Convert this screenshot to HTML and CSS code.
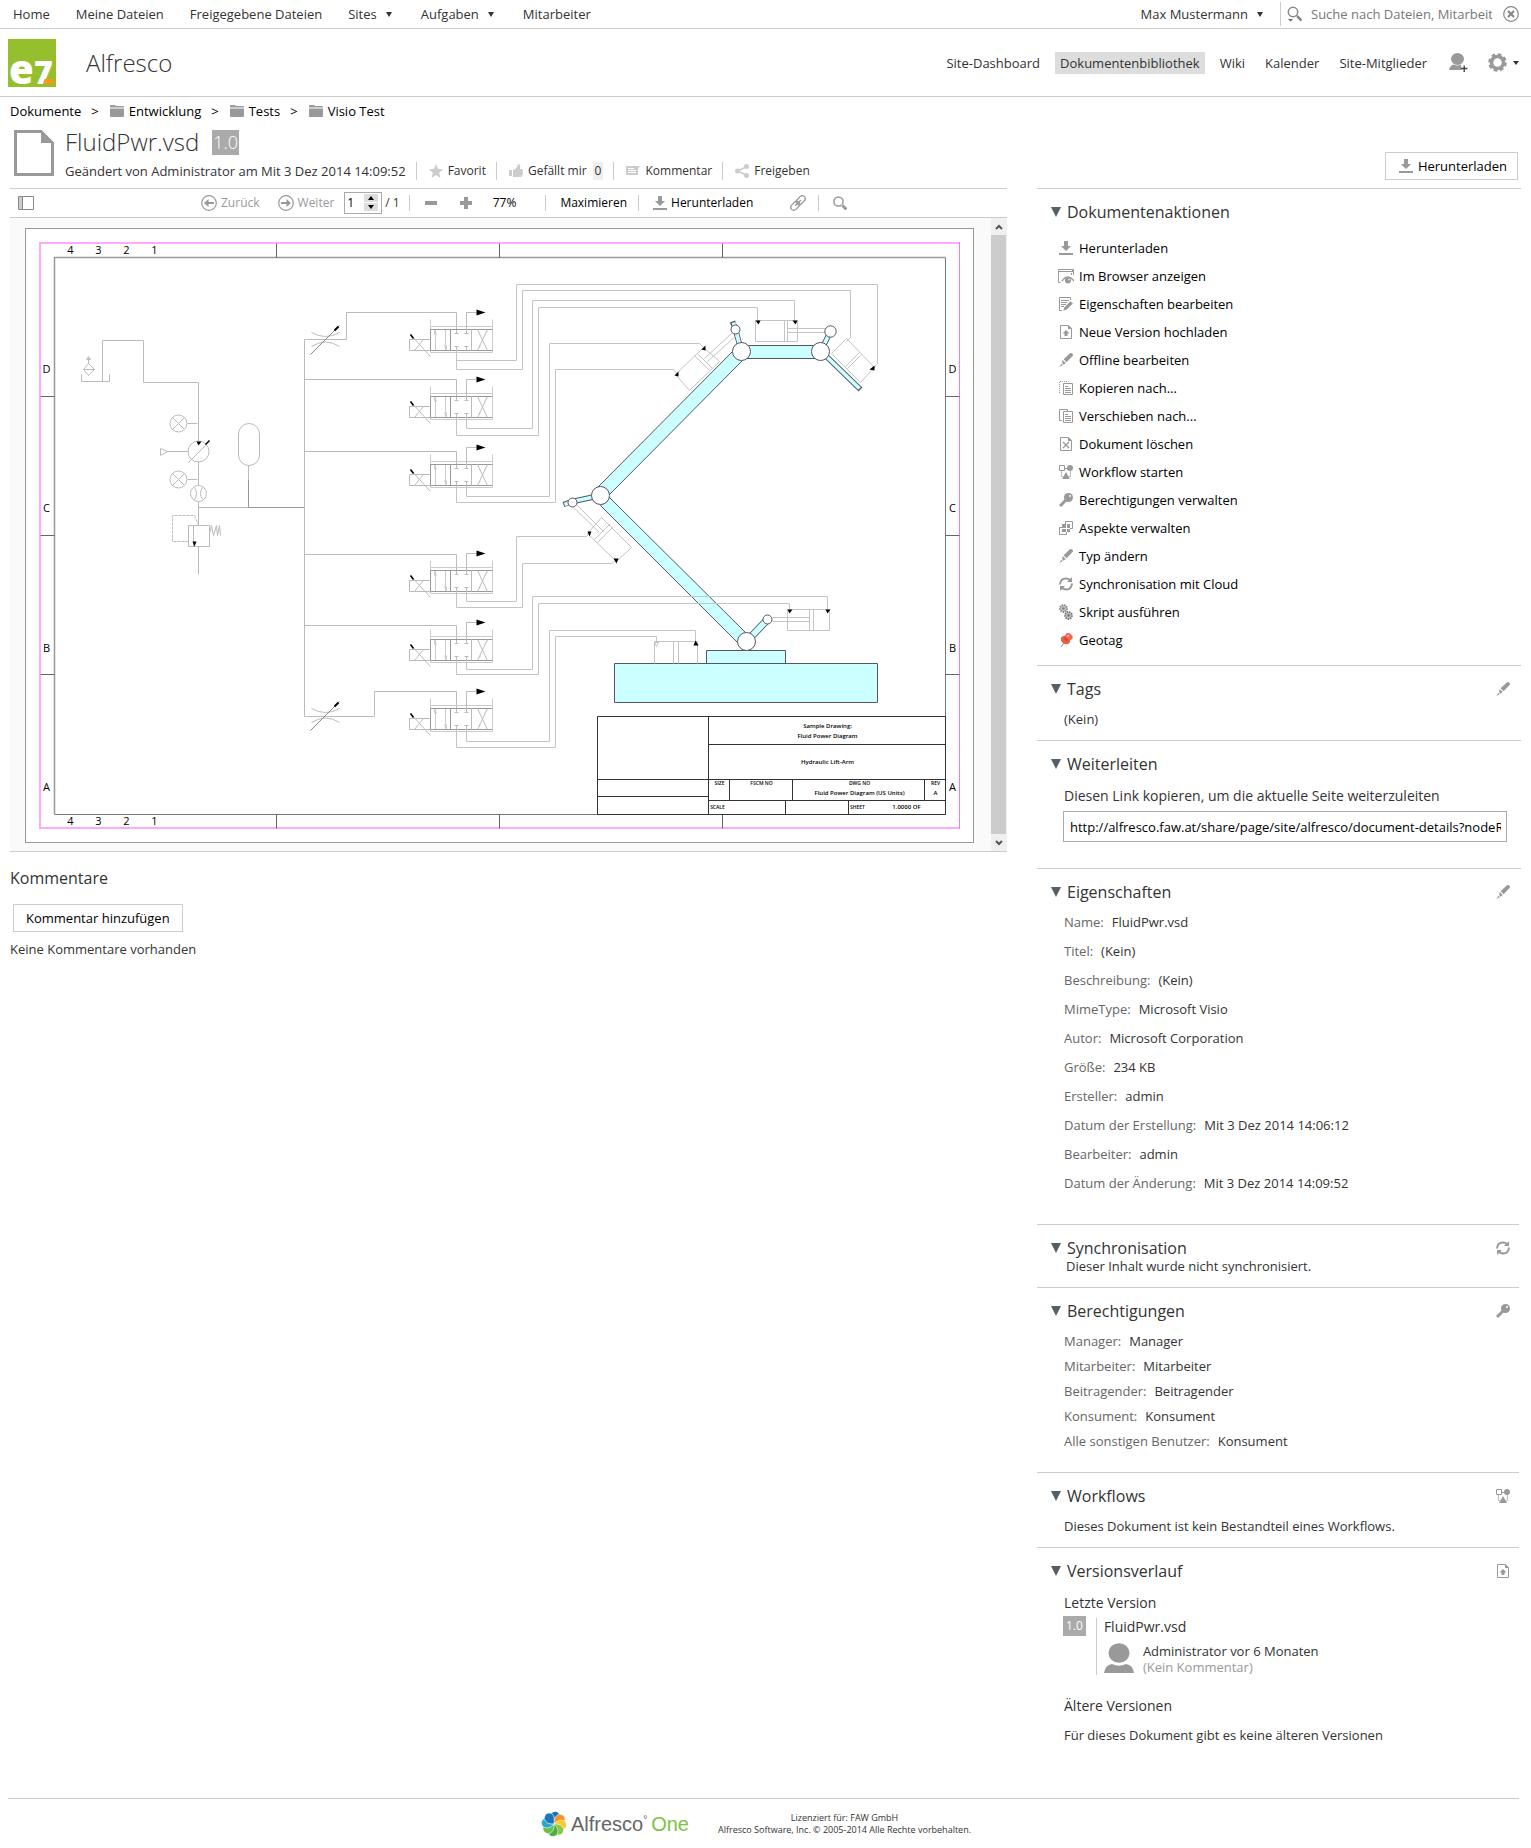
FILE: index.html
```html
<!DOCTYPE html>
<html lang="de">
<head>
<meta charset="utf-8">
<title>Alfresco – FluidPwr.vsd</title>
<link rel="stylesheet" href="styles.css">
</head>
<body>
<svg class="defs" aria-hidden="true">
  <symbol id="i-down" viewBox="0 0 14 14"><path fill="#999" d="M5 0h4v5h3L7 10 2 5h3zM0 12h14v2H0z"/></symbol>
  <symbol id="i-browser" viewBox="0 0 16 16"><path fill="none" stroke="#999" d="M2.500 14.500h-2V1.500h15V7M0 3.500h16M14.500 1v2M13.500 5v2"/><path fill="none" stroke="#999" stroke-width="1.400" d="M4 13q6-8 12 0"/><circle cx="10" cy="12.500" r="3" fill="#999"/><circle cx="11" cy="11.500" r="1" fill="#ddd"/></symbol>
  <symbol id="i-props" viewBox="0 0 14 14"><path fill="none" stroke="#999" d="M11.500 3V.5H.5v13H3M2 3.500h8M2 5.500h6M2 7.500h5M2 9.500h3"/><path fill="#999" d="M11.500 4.200l2.300 2.300-6 6L4.200 13.800l1.300-3.600z"/></symbol>
  <symbol id="i-upload" viewBox="0 0 14 14"><path fill="none" stroke="#999" d="M1.500.5h8l3 3v10h-11z"/><path fill="#999" d="M9 0v4h4zM7 5l3.500 3.500h-2V11h-3V8.500h-2z"/></symbol>
  <symbol id="i-edit" viewBox="0 0 14 14"><path fill="#999" d="M11 .3q1.500-.6 2.600.8.900 1-.1 2L7.600 9.200 4.600 6.300zM3.700 7.100l3 3-2 1.700-1.600-1.700zM2.600 10.700l1.300 1.400L.2 13.900z"/></symbol>
  <symbol id="i-copy" viewBox="0 0 14 14"><path fill="none" stroke="#999" stroke-dasharray="1 1" d="M.5 12V.5h9"/><path fill="#fff" stroke="#999" d="M4.500 2.500h9v11h-9z"/><path stroke="#999" d="M6 5.500h3M6 7.500h6M6 9.500h6M6 11.500h6"/></symbol>
  <symbol id="i-move" viewBox="0 0 14 14"><path fill="none" stroke="#999" d="M3 11.500H.5V.5h8V2"/><path fill="#fff" stroke="#999" d="M4.500 2.500h9v11h-9z"/><path stroke="#999" d="M6 5.500h3M6 7.500h6M6 9.500h6M6 11.500h6"/></symbol>
  <symbol id="i-delete" viewBox="0 0 14 14"><path fill="none" stroke="#999" d="M1.500.5h8l3 3v10h-11z"/><path fill="#999" d="M9 0v4h4z"/><path stroke="#999" stroke-width="1.300" d="M4 5l6 6M10 5l-6 6"/></symbol>
  <symbol id="i-flow" viewBox="0 0 14 14"><path fill="none" stroke="#999" d="M.5.5h5v5h-5zM5 3.500h4"/><path fill="none" stroke="#bbb" d="M2.500 6v5.500H4M11.500 6v5.500H10"/><circle cx="11" cy="3" r="3" fill="#999"/><path fill="#999" d="M7 7l4 7H3z"/></symbol>
  <symbol id="i-key" viewBox="0 0 14 14"><circle cx="9.500" cy="4.500" r="4.500" fill="#999"/><circle cx="11" cy="3" r="1" fill="#fff"/><path stroke="#999" stroke-width="3" d="M7 7l-6 6"/></symbol>
  <symbol id="i-aspects" viewBox="0 0 14 14"><path fill="none" stroke="#999" d="M6.500 3V.5h7v7H11M3 6.500H.5v7h7V11"/><path fill="#999" d="M3 3h4v4H3zM8 3h3v4H8zM3 8h4v3H3zM8 8h3v3H8z"/></symbol>
  <symbol id="i-sync" viewBox="0 0 14 14"><path fill="none" stroke="#999" stroke-width="2" d="M1 7.500Q1.500 1.500 7 1.600q2.500 0 4 1.600M13 6.500q-.5 6-6 5.900-2.500 0-4-1.600"/><path fill="#999" d="M13 0v5H8zM1 14V9h5z"/></symbol>
  <symbol id="i-script" viewBox="0 0 14 16"><circle cx="4.500" cy="4.500" r="3.400" fill="#ccc" stroke="#888" stroke-width="2" stroke-dasharray="1.500 .8"/><circle cx="4.500" cy="4.500" r="1.200" fill="#777"/><circle cx="9.500" cy="11.500" r="3.400" fill="#ccc" stroke="#777" stroke-width="2" stroke-dasharray="1.500 .8"/><circle cx="9.500" cy="11.500" r="1.200" fill="#666"/></symbol>
  <symbol id="i-geo" viewBox="0 0 14 14"><path stroke="#999" d="M6 9l-4 5"/><ellipse cx="6.500" cy="7" rx="5" ry="4" fill="#e8604c" transform="rotate(35 6.500 7)"/><path stroke="#d9452f" stroke-width="4" d="M6 7l3-3"/><ellipse cx="10" cy="3.500" rx="4" ry="3" fill="#ee6a55" transform="rotate(40 10 3.500)"/><circle cx="9" cy="2.800" r="1" fill="#fbb"/></symbol>
  <symbol id="i-folder" viewBox="0 0 14 12"><path fill="#999" d="M0 1q0-1 1-1h4l1 1h7q1 0 1 1v.5H0zM0 3.500h14V11q0 1-1 1H1q-1 0-1-1z"/></symbol>
  <symbol id="i-search" viewBox="0 0 14 14"><circle cx="5.500" cy="5.500" r="4.600" fill="none" stroke="#999" stroke-width="1.500"/><path stroke="#999" stroke-width="3" d="M9.500 9.500l4 4"/></symbol>
  <symbol id="i-user" viewBox="0 0 30 30"><ellipse cx="15" cy="10" rx="10.500" ry="9.800" fill="#999"/><path fill="#999" d="M0 30q1-8 8-9 7 3.500 14 0 7 1 8 9z"/></symbol>
</svg>

<header>
  <nav class="topbar" aria-label="Hauptmenü">
    <ul class="topmenu">
      <li><a href="#">Home</a></li>
      <li><a href="#">Meine Dateien</a></li>
      <li><a href="#">Freigegebene Dateien</a></li>
      <li><a href="#">Sites<i class="caret"></i></a></li>
      <li><a href="#">Aufgaben<i class="caret"></i></a></li>
      <li><a href="#">Mitarbeiter</a></li>
    </ul>
    <a class="account" href="#">Max Mustermann<i class="caret"></i></a>
    <form class="search">
      <svg class="icon-search" viewBox="0 0 15 16"><circle cx="6" cy="6" r="4.700" fill="none" stroke="#888" stroke-width="1.500"/><path stroke="#888" stroke-width="2.500" d="M10 10l4.500 4.500"/><path fill="#666" d="M1 13h5l-2.500 2.500z"/></svg>
      <input type="text" aria-label="Suche" placeholder="Suche nach Dateien, Mitarbeitern, Sites">
      <button type="button" aria-label="Leeren"><svg width="16" height="16" viewBox="0 0 16 16"><circle cx="8" cy="8" r="7.300" fill="none" stroke="#888" stroke-width="1.200"/><path stroke="#888" stroke-width="2.200" d="M5 5l6 6M11 5l-6 6"/></svg></button>
    </form>
  </nav>
  <div class="sitebar">
    <svg class="logo" viewBox="0 0 48 48"><path fill="#96bf2d" d="M0 0h48v48H0z"/><text x="1" y="45" class="logo-e">e</text><text x="26" y="45" class="logo-z">7</text><path fill="#f39a1e" d="M36.500 40H46v5H35z"/></svg>
    <h1>Alfresco</h1>
    <nav class="sitenav" aria-label="Site">
      <a href="#">Site-Dashboard</a>
      <a href="#" class="current">Dokumentenbibliothek</a>
      <a href="#">Wiki</a>
      <a href="#">Kalender</a>
      <a href="#">Site-Mitglieder</a>
    </nav>
    <button class="tool" aria-label="Benutzer einladen"><svg width="19" height="19" viewBox="0 0 19 19"><ellipse cx="8.500" cy="6" rx="6.500" ry="6" fill="#999"/><path fill="#999" d="M0 17q1-5 5-5.500 3 2 7 0l.5 5.500z"/><path stroke="#444" stroke-width="1.400" d="M12 15.500h6.500M15.200 12.500v6.500"/></svg></button>
    <button class="tool" aria-label="Einstellungen"><svg width="19" height="19" viewBox="0 0 19 19"><circle cx="9.500" cy="9.500" r="6" fill="none" stroke="#999" stroke-width="3.500"/><circle cx="9.500" cy="9.500" r="8.200" fill="none" stroke="#999" stroke-width="2.200" stroke-dasharray="3.800 2.640"/></svg><i class="caret"></i></button>
  </div>
</header>

<main>
  <nav class="crumbs" aria-label="Pfad">
    <a href="#">Dokumente</a><span>&gt;</span>
    <a href="#"><svg width="14" height="12"><use href="#i-folder"/></svg>Entwicklung</a><span>&gt;</span>
    <a href="#"><svg width="14" height="12"><use href="#i-folder"/></svg>Tests</a><span>&gt;</span>
    <a href="#"><svg width="14" height="12"><use href="#i-folder"/></svg>Visio Test</a>
  </nav>

  <div class="dochead">
    <svg class="docicon" width="40" height="46" viewBox="0 0 40 46"><path fill="#fff" stroke="#999" stroke-width="3" d="M1.500 1.500H27L38.500 13v31.500h-37z"/><path fill="#999" d="M27 0v13h13z"/></svg>
    <div class="docinfo">
      <h2>FluidPwr.vsd <span class="badge">1.0</span></h2>
      <ul class="docmeta">
        <li>Geändert von Administrator am Mit 3 Dez 2014 14:09:52</li>
        <li><a href="#"><svg width="14" height="14" viewBox="0 0 14 14"><path fill="#ccc" d="M7 0l2 4.800 5 .4-3.800 3.300L11.400 14 7 11l-4.400 3 1.200-5.500L0 5.200l5-.4z"/></svg>Favorit</a></li>
        <li><a href="#"><svg width="14" height="14" viewBox="0 0 14 14"><path fill="#ccc" d="M0 6h3v6H0zM4 6q4-1 5-6 3 0 2 5h2q1 1 1 3 0 5-3 5H4z"/></svg>Gefällt mir</a><b>0</b></li>
        <li><a href="#"><svg width="14" height="14" viewBox="0 0 14 14"><path fill="#ccc" d="M0 2h14l-2 3v6H0z"/><path stroke="#fff" d="M2 4.500h6M2 6.500h8M2 8.500h8"/></svg>Kommentar</a></li>
        <li><a href="#"><svg width="14" height="14" viewBox="0 0 14 14"><path fill="none" stroke="#ccc" stroke-width="1.500" d="M12 2.500L2.500 7l9.500 4.500"/><circle cx="2.500" cy="7" r="2.500" fill="#ccc"/><circle cx="11.500" cy="2.500" r="2.500" fill="#ccc"/><circle cx="11.500" cy="11.500" r="2.500" fill="#ccc"/></svg>Freigeben</a></li>
      </ul>
    </div>
    <button class="btn"><svg width="14" height="14"><use href="#i-down"/></svg>Herunterladen</button>
  </div>

  <div class="columns">
    <section class="left">
      <div class="viewer">
        <div class="toolbar">
          <button class="t-side" aria-label="Seitenleiste"><svg width="16" height="14" viewBox="0 0 16 14"><path fill="#ccc" d="M0 0h5v14H0z"/><path fill="none" stroke="#888" d="M.5.5h15v13H.5zM4.500 0v14"/></svg></button>
          <button class="muted"><svg width="16" height="16" viewBox="0 0 16 16"><circle cx="8" cy="8" r="7.300" fill="none" stroke="#999" stroke-width="1.200"/><path fill="#999" d="M3 8l4.500-4v3H13v2H7.500v3z"/></svg>Zurück</button>
          <button class="muted t-next"><svg width="16" height="16" viewBox="0 0 16 16"><circle cx="8" cy="8" r="7.300" fill="none" stroke="#999" stroke-width="1.200"/><path fill="#999" d="M13 8L8.500 4v3H3v2h5.500v3z"/></svg>Weiter</button>
          <span class="pager"><input type="text" value="1" aria-label="Seite"><span class="spin"><button aria-label="Hoch"><svg width="6" height="4"><path d="M0 4l3-4 3 4z"/></svg></button><button aria-label="Runter"><svg width="6" height="4"><path d="M0 0l3 4 3-4z"/></svg></button></span></span>
          <span class="count">/ 1</span>
          <span class="sep"></span>
          <button class="t-minus" aria-label="Verkleinern"><svg width="12" height="12"><path fill="#999" d="M0 4h12v4H0z"/></svg></button>
          <button class="t-plus" aria-label="Vergrößern"><svg width="12" height="12"><path fill="#999" d="M0 4h4V0h4v4h4v4H8v4H4V8H0z"/></svg></button>
          <span class="t-zoom">77%</span>
          <span class="sep"></span>
          <button class="t-max">Maximieren</button>
          <span class="sep"></span>
          <button class="t-down"><svg width="14" height="14"><use href="#i-down"/></svg>Herunterladen</button>
          <button class="t-link" aria-label="Link"><svg width="16" height="16" viewBox="0 0 16 16"><g fill="none" stroke="#999" stroke-width="1.300" transform="rotate(-45 8 8)"><rect x="-1" y="5" width="10" height="6" rx="3"/><rect x="7" y="5" width="10" height="6" rx="3"/><path d="M4 8h8"/></g></svg></button>
          <span class="sep"></span>
          <button class="t-search" aria-label="Suchen"><svg width="14" height="14"><use href="#i-search"/></svg></button>
        </div>
        <div class="stage">
          <div class="sheet">
            <svg class="drawing" viewBox="26 229 947 613" role="img" aria-label="Fluid Power Diagram">
              <defs>
                <g id="valve" fill="none" stroke="#ccc">
                  <path d="M430 7v33M492 7v33M430 14h62M430 40h62M435 17v21M445 17v21"/>
                  <path stroke="#999" d="M430 17h62M430 38h62M430 17v21M450 17v21"/>
                  <path stroke="#bbb" d="M471 17v21M409 27h21M409 38h21M409 27v11M477 17l10 21M487 17l-10 21M414 38l9-11M410 22l20 22M454 21h4M464 21h4M454 34h4M464 34h4"/>
                  <path d="M434 22v-4l2 4M444 33l2 4v-4M484 22l3-4M480 34l-3 3"/>
                  <path stroke="#bbb" d="M466 21V0h10M456 34v4M466 34v4"/>
                  <path stroke="#000" stroke-width="1.500" d="M410 22l3 4"/>
                  <path fill="#000" stroke="none" d="M476-3l9 3-9 3z"/>
                </g>
                <g id="throttle" fill="none" stroke="#bbb"><path d="M311-7q14 8 28 0M311 7q14-9 28 0"/><path stroke="#888" d="M310 15l29-29"/><path stroke="#000" stroke-width="2" d="M334-9l4-4"/></g>
                <g id="gauge" fill="none" stroke="#bbb"><circle r="8.500"/><path d="M-6-6L6 6M6-6L-6 6M9 0h10"/></g>
              </defs>
              <path fill="none" stroke="#ffaaff" stroke-width="2" d="M959 243H40v585h919"/>
              <path stroke="#ff70ff" d="M959.500 242v587"/>
              <g transform="translate(.5 .5)">
                <path fill="none" stroke="#777" d="M945 257v557H54"/>
                <path fill="none" stroke="#999" stroke-width="1.500" d="M945 257H54v557"/>
                <path fill="none" stroke="#666" d="M276 243v14M499 243v14M722 243v14M276 814v14M499 814v14M722 814v14M40 396h14M40 535h14M40 674h14M945 396h14M945 535h14M945 674h14"/>
                <g class="frame-label">
                  <text x="70" y="253">4</text><text x="98" y="253">3</text><text x="126" y="253">2</text><text x="154" y="253">1</text>
                  <text x="70" y="824">4</text><text x="98" y="824">3</text><text x="126" y="824">2</text><text x="154" y="824">1</text>
                  <text x="46" y="372">D</text><text x="46" y="511">C</text><text x="46" y="651">B</text><text x="46" y="790">A</text>
                  <text x="952" y="372">D</text><text x="952" y="511">C</text><text x="952" y="651">B</text><text x="952" y="790">A</text>
                </g>
                <g fill="none" stroke="#bbb">
                  <path d="M102 381v-41h41v42h55v59M81 374v7h28v-7M198 461v24M198 501v24M198 546v28M198 507h50M167 451h21M248 465v14"/>
                  <path d="M88 363l6 6-6 6-5-6zM83 369h11M88 363v-6M86 359l2-3 2 3z"/>
                  <path stroke="#999" d="M248 479v28h56"/>
                  <circle cx="198" cy="451" r="10.500"/><circle cx="198" cy="493" r="8"/>
                  <path d="M194 487q4 6 0 12M202 487q-4 6 0 12M188 462l20-20M160 448v7l7-4z"/>
                  <rect x="238" y="423" width="21" height="42" rx="10.500"/>
                  <path d="M188 525h21v21h-21zM193 525v21M209 533l2-8 2 10 3-10 1 10 2-10 1 10"/>
                  <path stroke-dasharray="3 1" d="M188 541h-16v-26h22l4 10"/>
                  <path d="M304 716V339h42v-27h110v21M304 379h152v21M304 451h152v17M304 554h152v20M304 625h152v18M304 716h70v-25h82v21"/>
                </g>
                <use href="#gauge" x="178" y="423"/><use href="#gauge" x="178" y="479"/>
                <path d="M196 441h5l-3 4zM192 541h4l-2 5z"/><path stroke="#000" stroke-width="1.500" d="M205 444l4-4"/>
                <use href="#throttle" y="339"/><use href="#throttle" y="715"/>
                <use href="#valve" y="312"/><use href="#valve" y="379"/><use href="#valve" y="447"/><use href="#valve" y="553"/><use href="#valve" y="622"/><use href="#valve" y="691"/>

                <g fill="#cff" stroke="#556">
                  <path d="M741 345h79v13h-79zM597 487l136-137 9 10-133 134zM609 497l137 136-9 9-137-137z"/>
                  <path d="M614 663h263v39H614zM706 650h79v13h-79z"/>
                </g>
                <g fill="none" stroke="#556" stroke-width="5.500"><path d="M741 351l-6-22-3-8M820 351l10-20M826 356l34 33M600 495l-28 6-9 3"/><path stroke-width="7.500" d="M748 639l19-20"/></g>
                <g fill="none" stroke="#cff" stroke-width="3.800"><path d="M741 351l-6-22-2-7M820 351l10-20M826 356l33 32M600 495l-28 6-8 3"/><path stroke-width="5.800" d="M748 639l19-20"/></g>

                <g fill="none" stroke="#c4c4c4">
                  <path d="M456 350v10h60v-76h361v79l-4 5M456 350v19h66v-79h328v47l-4 4"/>
                  <path d="M466 417v11h66V300h262v20M456 417v18h82V307h219v13"/>
                  <path d="M466 485v11h83V343h150l4 4M456 485v17h99V369h118l4 5"/>
                  <path d="M466 591v10h50v-65h70l3-3M456 591v16h66v-44h89l5-4"/>
                  <path d="M466 660v9h66v-73h295v13M456 660v14h82v-71h251v6"/>
                  <path d="M466 729v12h83V630h146v11M456 729v18h99V636h101v5"/>
                  <path d="M755 320h42v21h-42zM784 320v21M787 320v21M787 328h38M787 332h38"/>
                  <path d="M831 353l15-15 28 29-14 15zM859 352l-14 14M861 354l-14 14"/>
                  <path d="M703 347l16 14-30 29-14-16zM697 353l15 15M694 355l15 15M732 332l-28 26M736 335l-29 26"/>
                  <path d="M601 517l30 30-15 14-29-28zM609 524l-15 15M612 527l-15 15M576 504l27 27M573 507l26 25"/>
                  <path d="M787 609h42v21h-42zM809 609v21M813 609v21M772 617h37M772 621h37"/>
                  <path d="M654 663v-22h43v22M673 641v22M678 641v22M654 642h4l-2 4z"/>
                </g>
                <g fill="#fff" stroke="#556"><circle cx="741" cy="351" r="9"/><circle cx="820" cy="351" r="9"/><circle cx="600" cy="495" r="9"/><circle cx="746" cy="641" r="9"/><circle cx="735" cy="329" r="4.500"/><circle cx="830" cy="331" r="5.700"/><circle cx="572" cy="502" r="4.500"/><circle cx="767" cy="619" r="4.500"/></g>
                <path d="M755 320h5l-2 4zM792 320h5l-2 4zM787 609h5l-3 4zM825 609h5l-3 4zM693 645h5l-3-5zM701 349l4-4v5zM674 375l4-4v5zM869 369l5-4v5zM587 531h4l-2 5zM613 558h5l-2 5z"/>

                <path fill="none" stroke="#333" d="M597 716h348v98H597zM708 716v98M708 744h237M597 779h348M597 796h111M708 800h237M729 779v21M792 779v21M924 779v21M785 800v14M848 800v14"/>
                <g class="title-block">
                  <text x="827" y="727">Sample Drawing:</text><text x="827" y="737">Fluid Power Diagram</text><text x="827" y="763">Hydraulic Lift-Arm</text>
                  <text x="859" y="794">Fluid Power Diagram (US Units)</text><text x="935" y="794">A</text><text x="906" y="808">1.0000 OF</text>
                </g>
                <g class="title-caps"><text x="719" y="784">SIZE</text><text x="761" y="784">FSCM NO</text><text x="859" y="784">DWG NO</text><text x="935" y="784">REV</text><text x="717" y="808">SCALE</text><text x="857" y="808">SHEET</text></g>
              </g>
            </svg>
          </div>
          <div class="scrollbar"><button aria-label="Nach oben"><svg width="8" height="6"><path fill="none" stroke="#555" stroke-width="2" d="M1 5l3-3 3 3"/></svg></button><div class="thumb"></div><button aria-label="Nach unten"><svg width="8" height="6"><path fill="none" stroke="#555" stroke-width="2" d="M1 1l3 3 3-3"/></svg></button></div>
        </div>
      </div>
      <div class="comments">
        <h2>Kommentare</h2>
        <button class="btn">Kommentar hinzufügen</button>
        <p>Keine Kommentare vorhanden</p>
      </div>
    </section>

    <aside>
      <section class="panel wide">
        <h2><i class="tri"></i>Dokumentenaktionen</h2>
        <ul class="actions">
          <li><a href="#"><svg><use href="#i-down"/></svg>Herunterladen</a></li>
          <li><a href="#"><svg class="big"><use href="#i-browser"/></svg>Im Browser anzeigen</a></li>
          <li><a href="#"><svg><use href="#i-props"/></svg>Eigenschaften bearbeiten</a></li>
          <li><a href="#"><svg><use href="#i-upload"/></svg>Neue Version hochladen</a></li>
          <li><a href="#"><svg><use href="#i-edit"/></svg>Offline bearbeiten</a></li>
          <li><a href="#"><svg><use href="#i-copy"/></svg>Kopieren nach...</a></li>
          <li><a href="#"><svg><use href="#i-move"/></svg>Verschieben nach...</a></li>
          <li><a href="#"><svg><use href="#i-delete"/></svg>Dokument löschen</a></li>
          <li><a href="#"><svg><use href="#i-flow"/></svg>Workflow starten</a></li>
          <li><a href="#"><svg><use href="#i-key"/></svg>Berechtigungen verwalten</a></li>
          <li><a href="#"><svg><use href="#i-aspects"/></svg>Aspekte verwalten</a></li>
          <li><a href="#"><svg><use href="#i-edit"/></svg>Typ ändern</a></li>
          <li><a href="#"><svg><use href="#i-sync"/></svg>Synchronisation mit Cloud</a></li>
          <li><a href="#"><svg class="big"><use href="#i-script"/></svg>Skript ausführen</a></li>
          <li><a href="#"><svg><use href="#i-geo"/></svg>Geotag</a></li>
        </ul>
      </section>
      <section class="panel wide">
        <h2><i class="tri"></i>Tags<a href="#" aria-label="Tags bearbeiten"><svg><use href="#i-edit"/></svg></a></h2>
        <p>(Kein)</p>
      </section>
      <section class="panel wide share">
        <h2><i class="tri"></i>Weiterleiten</h2>
        <label for="link">Diesen Link kopieren, um die aktuelle Seite weiterzuleiten</label>
        <input id="link" type="text" value="http://alfresco.faw.at/share/page/site/alfresco/document-details?nodeRef=workspace">
      </section>
      <section class="panel wide">
        <h2><i class="tri"></i>Eigenschaften<a href="#" aria-label="Eigenschaften bearbeiten"><svg><use href="#i-edit"/></svg></a></h2>
        <dl class="props">
          <div><dt>Name:</dt><dd>FluidPwr.vsd</dd></div>
          <div><dt>Titel:</dt><dd>(Kein)</dd></div>
          <div><dt>Beschreibung:</dt><dd>(Kein)</dd></div>
          <div><dt>MimeType:</dt><dd>Microsoft Visio</dd></div>
          <div><dt>Autor:</dt><dd>Microsoft Corporation</dd></div>
          <div><dt>Größe:</dt><dd>234 KB</dd></div>
          <div><dt>Ersteller:</dt><dd>admin</dd></div>
          <div><dt>Datum der Erstellung:</dt><dd>Mit 3 Dez 2014 14:06:12</dd></div>
          <div><dt>Bearbeiter:</dt><dd>admin</dd></div>
          <div><dt>Datum der Änderung:</dt><dd>Mit 3 Dez 2014 14:09:52</dd></div>
        </dl>
      </section>
      <section class="panel sync">
        <h2><i class="tri"></i>Synchronisation<a href="#" aria-label="Synchronisieren"><svg><use href="#i-sync"/></svg></a></h2>
        <p>Dieser Inhalt wurde nicht synchronisiert.</p>
      </section>
      <section class="panel">
        <h2><i class="tri"></i>Berechtigungen<a href="#" aria-label="Berechtigungen verwalten"><svg><use href="#i-key"/></svg></a></h2>
        <dl class="props perms">
          <div><dt>Manager:</dt><dd>Manager</dd></div>
          <div><dt>Mitarbeiter:</dt><dd>Mitarbeiter</dd></div>
          <div><dt>Beitragender:</dt><dd>Beitragender</dd></div>
          <div><dt>Konsument:</dt><dd>Konsument</dd></div>
          <div><dt>Alle sonstigen Benutzer:</dt><dd>Konsument</dd></div>
        </dl>
      </section>
      <section class="panel">
        <h2><i class="tri"></i>Workflows<a href="#" aria-label="Workflow starten"><svg><use href="#i-flow"/></svg></a></h2>
        <p>Dieses Dokument ist kein Bestandteil eines Workflows.</p>
      </section>
      <section class="panel">
        <h2><i class="tri"></i>Versionsverlauf<a href="#" aria-label="Neue Version hochladen"><svg><use href="#i-upload"/></svg></a></h2>
        <h3>Letzte Version</h3>
        <div class="version">
          <span class="badge small">1.0</span>
          <div class="vbody">
            <div class="vname">FluidPwr.vsd</div>
            <div class="vuser"><svg width="30" height="30"><use href="#i-user"/></svg><div>Administrator vor 6 Monaten<br><span>(Kein Kommentar)</span></div></div>
          </div>
        </div>
        <h3 class="older">Ältere Versionen</h3>
        <p>Für dieses Dokument gibt es keine älteren Versionen</p>
      </section>
    </aside>
  </div>
</main>

<footer>
  <div class="brand">
    <svg width="26" height="26" viewBox="-13 -13 26 26">
      <defs><path id="petal" d="M0 0Q-6-5-3-11 3-15 6-9 6-4 0 0z" stroke="#fff" stroke-width=".6"/></defs>
      <use href="#petal" fill="#1d6fb8"/><use href="#petal" fill="#f7941e" transform="rotate(45)"/><use href="#petal" fill="#fdc82f" transform="rotate(90)"/><use href="#petal" fill="#8dc63f" transform="rotate(135)"/><use href="#petal" fill="#4cae4a" transform="rotate(180)"/><use href="#petal" fill="#6abf4b" transform="rotate(225)"/><use href="#petal" fill="#27a9c9" transform="rotate(270)"/><use href="#petal" fill="#1c75bc" transform="rotate(315)"/>
    </svg>
    <span class="b1">Alfresco</span><sup>°</sup><span class="b2">One</span>
  </div>
  <p>Lizenziert für: FAW GmbH<br>Alfresco Software, Inc. © 2005-2014 Alle Rechte vorbehalten.</p>
</footer>
</body>
</html>
```
FILE: styles.css
```css
* { box-sizing: border-box; }
body { margin: 0; background: #fff; color: #333; font: 13px/20px "Open Sans", "Noto Sans", sans-serif; }
h1, h2, h3, p, ul, dl, dd { margin: 0; padding: 0; }
ul { list-style: none; }
a { color: inherit; text-decoration: none; }
svg { flex: none; }
.defs { display: none; }
button, input { font: inherit; color: #000; margin: 0; padding: 0; border: 0; background: none; border-radius: 0; outline: 0; }
button { display: inline-flex; align-items: center; justify-content: center; }
.caret { display: inline-block; margin-left: 9px; vertical-align: 2px; border: 3px solid transparent; border-top: 5px solid #333; border-bottom: 0; }

.topbar { display: flex; align-items: center; height: 29px; border-bottom: 1px solid #ccc; padding: 0 12px 1px 13px; }
.topmenu { display: flex; gap: 26px; flex: 1; }
.topmenu .caret { margin-right: 3px; }
.account { margin-right: 17px; }
.search { display: flex; align-items: center; border-left: 1px solid #ccc; height: 24px; padding-left: 6px; }
.icon-search { width: 15px; height: 16px; }
.search input { width: 181px; margin: 0 11px 0 9px; }
.search input::placeholder { color: #777; opacity: 1; }

.sitebar { display: flex; align-items: center; height: 68px; border-bottom: 1px solid #ccc; padding: 0 12px 0 8px; }
.logo { width: 48px; height: 48px; overflow: visible; }
.logo-e, .logo-z { font-family: "Open Sans", sans-serif; font-weight: 800; fill: #fff; }
.logo-e { font-size: 40px; }
.logo-z { font-size: 32px; }
h1 { font-size: 24px; font-weight: 300; margin-left: 30px; flex: 1; }
.sitenav { display: flex; gap: 10px; margin-right: 17px; }
.sitenav a { padding: 1px 5px; }
.sitenav .current { background: #ddd; }
.tool + .tool { margin-left: 20px; }
.tool .caret { margin-left: 6px; border-width: 4px 3px 0; }

main { padding: 0 10px; }
.crumbs { display: flex; align-items: center; gap: 10px; color: #000; padding-bottom: 5px; height: 33px; }
.crumbs span { margin-right: 1px; }
.crumbs a { display: flex; align-items: center; gap: 5px; }
.dochead { display: flex; height: 58px; }
.docicon { margin-left: 4px; }
.docinfo { flex: 1; margin-left: 11px; }
.dochead h2 { display: flex; align-items: flex-start; gap: 13px; font-size: 24px; line-height: 24px; font-weight: 300; }
.badge { background: #aaa; color: #fff; font-size: 18px; line-height: 25px; padding: 0 1px; }
.docmeta { display: flex; align-items: center; margin-top: 7px; }
.docmeta li { display: flex; align-items: center; line-height: 18px; }
.docmeta li + li { margin-left: 10px; padding-left: 12px; border-left: 1px solid #ccc; font-size: 12px; }
.docmeta a { display: flex; align-items: center; gap: 5px; }
.docmeta b { font-weight: 400; background: #eee; padding: 0 2px; margin-left: 6px; }
.btn { border: 1px solid #ccc; height: 28px; padding: 0 11px; gap: 5px; }
.dochead .btn { margin: 22px 3px 0 0; align-self: flex-start; padding: 0 10px 0 13px; }

.columns { display: grid; grid-template-columns: minmax(0, 1fr) 484px; gap: 30px; align-items: start; }
.toolbar { display: flex; align-items: center; height: 30px; border: 1px solid #ccc; border-width: 1px 0; padding: 0 0 1px 8px; font-size: 12px; }
.toolbar button { gap: 4px; }
.toolbar .muted { color: #999; }
.t-side { margin-right: 167px; }
.toolbar .t-next { margin-left: 18px; }
.pager { display: flex; align-items: center; width: 38px; height: 22px; border: 1px solid #aaa; margin-left: 10px; padding-left: 2px; }
.pager input { width: 17px; }
.spin { display: flex; flex-direction: column; gap: 1px; }
.toolbar .spin button { width: 14px; height: 8px; background: #ddd; }
.count { margin-left: 3px; color: #333; }
.sep { width: 1px; height: 16px; background: #ccc; }
.count + .sep { margin-left: 9px; }
.t-minus { margin-left: 15px; }
.t-plus { margin-left: 23px; }
.t-zoom { margin: 0 29px 0 21px; color: #000; }
.toolbar .t-max { margin: 0 11px 0 14px; }
.t-down { margin-left: 14px; }
.t-link { margin: 0 12px 0 37px; }
.t-search { margin-left: 14px; }
.stage { display: flex; background: #fafafa; border-bottom: 1px solid #ccc; }
.sheet { flex: 1; min-width: 0; margin: 10px 17px 8px 15px; border: 1px solid #999; background: #fff; }
.drawing { display: block; width: 100%; height: auto; }
.scrollbar { display: flex; flex-direction: column; width: 16px; background: #f0f0f0; }
.scrollbar button { height: 17px; }
.thumb { flex: 1; background: #ccc; margin-right: 1px; }
.frame-label { font-size: 11px; text-anchor: middle; }
.title-block { font-size: 6px; text-anchor: middle; font-weight: 600; }
.title-caps { font-size: 5px; text-anchor: middle; font-weight: 600; }
.comments { padding-top: 16px; }
h2 { font-size: 16px; line-height: 20px; font-weight: 400; }
.comments .btn { margin: 16px 0 7px 3px; padding: 0 12px; }

.panel { border-top: 1px solid #ccc; padding: 13px 9px 11px 27px; margin-right: 2px; }
.panel.wide { margin-right: 0; padding-right: 11px; }
.panel h2 { display: flex; align-items: center; margin-left: -13px; }
.tri { border: 5px solid transparent; border-top: 10px solid #555f66; border-bottom: 0; margin-right: 6px; }
.panel h2 a { margin-left: auto; display: flex; }
.panel svg { width: 14px; height: 14px; }
.panel p { margin-top: 10px; }
.actions { margin: 12px 0 0 -5px; color: #000; }
.actions a { display: flex; align-items: center; gap: 6px; line-height: 28px; }
.actions .big { width: 16px; height: 16px; margin: 0 -1px; }
.share { display: flex; flex-direction: column; }
.panel.share { padding-bottom: 26px; }
.share label { margin-top: 12px; font-size: 14px; }
.share input { height: 31px; margin: 5px 3px 0 -1px; border: 1px solid #aaa; padding: 0 5px 0 6px; }
.props { margin-top: 6px; padding-bottom: 15px; }
.props div { display: flex; gap: 8px; line-height: 29px; }
.props dt { color: #666; }
.perms { margin-top: 8px; padding-bottom: 7px; }
.perms div { line-height: 25px; }
.panel.sync { padding-bottom: 13px; }
.sync p { margin: 0 0 0 2px; line-height: 16px; }
h3 { font-size: 14px; font-weight: 400; margin-top: 12px; }
.version { display: flex; align-items: flex-start; margin: 3px 0 0 -1px; }
.badge.small { font-size: 12px; line-height: 20px; padding: 0 3px; }
.vbody { border-left: 1px solid #ccc; margin: 2px 0 0 10px; padding-left: 7px; height: 57px; }
.vname { font-size: 14px; line-height: 18px; }
.vuser { display: flex; gap: 9px; margin-top: 7px; line-height: 16px; }
.panel .vuser svg { width: 30px; height: 30px; }
.vuser span { color: #999; }
.panel .older { margin-top: 21px; }
.older + p { margin-top: 9px; }

footer { display: flex; justify-content: center; align-items: center; gap: 29px; margin: 42px 12px 0 8px; padding: 0 15px 0 0; border-top: 1px solid #ccc; height: 50px; }
.brand { display: flex; align-items: center; font: 20px/24px "Liberation Sans", Arial, sans-serif; }
.b1 { color: #666; margin-left: 4px; }
.brand sup { font-size: 10px; line-height: 18px; color: #666; align-self: flex-start; }
.b2 { color: #7cc242; margin-left: 4px; }
footer p { font-size: 9px; line-height: 12px; text-align: center; }
```
